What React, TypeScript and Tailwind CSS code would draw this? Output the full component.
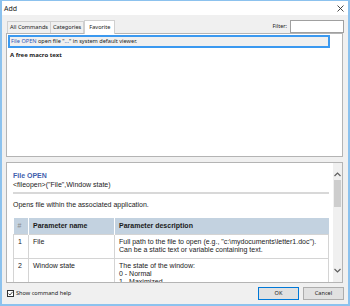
const ROWS = [
  {
    n: "1",
    name: "File",
    desc: ["Full path to the file to open (e.g., \"c:\\mydocuments\\letter1.doc\").", "Can be a static text or variable containing text."],
  },
  {
    n: "2",
    name: "Window state",
    desc: ["The state of the window:", "0 - Normal", "1 - Maximized"],
  },
];

function Chevron({ down = false }: { down?: boolean }) {
  return (
    <svg width="7" height="5" viewBox="0 0 7 5" className="block">
      <path
        d={down ? "M0.5 1 L3.5 4 L6.5 1" : "M0.5 4 L3.5 1 L6.5 4"}
        fill="none"
        stroke="#606060"
        strokeWidth="1.2"
      />
    </svg>
  );
}

export default function App() {
  return (
    <div className="w-[350px] h-[306px] flex flex-col overflow-hidden bg-[#f0f0f0] border-x-2 border-b-2 border-t border-[#8cc2ee] font-['Noto_Sans',sans-serif] text-[#1a1a1a]">
      {/* title bar */}
      <div className="h-[14px] bg-white flex items-center justify-between pl-[2px] pr-[4px] shrink-0">
        <span className="text-[7px] leading-none">Add</span>
        <svg width="7" height="7" viewBox="0 0 7 7">
          <path d="M0.5 0.5 L6.5 6.5 M6.5 0.5 L0.5 6.5" stroke="#333" strokeWidth="0.9" />
        </svg>
      </div>

      {/* tabs + filter */}
      <div className="h-[18px] flex items-end justify-between pl-[5px] pr-[4px] shrink-0">
        <div className="flex items-end text-[5.6px] leading-none">
          <div className="h-[12px] px-[2px] flex items-center bg-[#f0f0f0] border border-b-0 border-[#d0d0d0]">All Commands</div>
          <div className="h-[12px] px-[2px] flex items-center bg-[#f0f0f0] border border-l-0 border-b-0 border-[#d0d0d0]">Categories</div>
          <div className="h-[14px] px-[4px] flex items-center bg-white border border-b-0 border-[#d0d0d0] -mb-px relative">Favorite</div>
        </div>
        <div className="flex items-center gap-[3px]">
          <span className="text-[5.5px] leading-none">Filter:</span>
          <div className="w-[54px] h-[13px] bg-white border border-[#a0a0a0]" />
        </div>
      </div>

      {/* macro list panel */}
      <div className="ml-[4px] mr-[5px] h-[124px] bg-white border border-[#b4b4b4] shrink-0 pt-px pl-px pr-[12px]">
        <div className="h-[13px] flex items-center border-2 border-[#3b99f0] bg-[#f0f0f0] px-[1px] text-[5.6px] leading-none whitespace-nowrap">
          <span className="text-[#2f56b5]">File OPEN</span>
          <span>&nbsp;open file "</span>
          <span className="text-[#2f56b5]">...</span>
          <span>" in system default viewer.</span>
        </div>
        <div className="mt-[2px] pl-[2px] text-[6px] font-bold leading-[10px]">A free macro text</div>
      </div>

      <div className="h-[5px] shrink-0" />

      {/* help panel */}
      <div className="ml-[4px] mr-[5px] h-[121px] bg-white border border-[#b4b4b4] shrink-0 flex overflow-hidden">
        <div className="flex-1 min-w-0 pl-[6px] pr-[4px] pt-[8px] font-['Liberation_Sans',Arial,sans-serif] text-[7px]">
          <div className="text-[#3f5fae] font-bold leading-[9px]">File OPEN</div>
          <div className="leading-[9px]">&lt;fileopen&gt;("File",Window state)</div>
          <div className="h-[2px] bg-[#d8d8d8] mt-[3px]" />
          <div className="mt-[6px] leading-[9px]">Opens file within the associated application.</div>
          <table className="mt-[9px] w-full border-collapse">
            <thead>
              <tr className="h-[16px] bg-[#c3d2e0] text-left">
                <th className="w-[15px] border-r border-white pl-[4px] font-normal text-[#8a8a8a]">#</th>
                <th className="w-[86px] border-r border-white pl-[4px] font-bold">Parameter name</th>
                <th className="pl-[4px] font-bold">Parameter description</th>
              </tr>
            </thead>
            <tbody>
              {ROWS.map((r) => (
                <tr key={r.n} className="align-top border border-[#d4d4d4]">
                  <td className="border-r border-[#d4d4d4] pl-[4px] pt-[3px] pb-[4px] leading-[8px]">{r.n}</td>
                  <td className="border-r border-[#d4d4d4] pl-[4px] pt-[3px] leading-[8px]">{r.name}</td>
                  <td className="pl-[4px] pt-[3px] pb-[4px] leading-[8px]">
                    {r.desc.map((d, i) => (
                      <div key={i}>{d}</div>
                    ))}
                  </td>
                </tr>
              ))}
            </tbody>
          </table>
        </div>
        <div className="w-[9px] shrink-0 bg-[#f0f0f0] flex flex-col items-center py-[9px]">
          <Chevron />
          <div className="w-[7px] h-[27px] bg-[#cdcdcd] mt-[3px]" />
          <div className="flex-1" />
          <Chevron down />
        </div>
      </div>

      {/* bottom */}
      <div className="flex-1 flex items-center justify-between pl-[5px] pr-[4px]">
        <label className="flex items-center gap-[2px] text-[5.6px] leading-none">
          <span className="w-[7px] h-[7px] border border-[#333] bg-white flex items-center justify-center">
            <svg width="5" height="5" viewBox="0 0 5 5">
              <path d="M0.5 2.6 L2 4 L4.6 0.8" fill="none" stroke="#222" strokeWidth="0.8" />
            </svg>
          </span>
          Show command help
        </label>
        <div className="flex gap-[4px] text-[5.6px] leading-none">
          <button className="w-[41px] h-[13px] bg-[#e1e1e1] border border-[#0078d7]">OK</button>
          <button className="w-[41px] h-[13px] bg-[#e1e1e1] border border-[#adadad]">Cancel</button>
        </div>
      </div>
    </div>
  );
}
